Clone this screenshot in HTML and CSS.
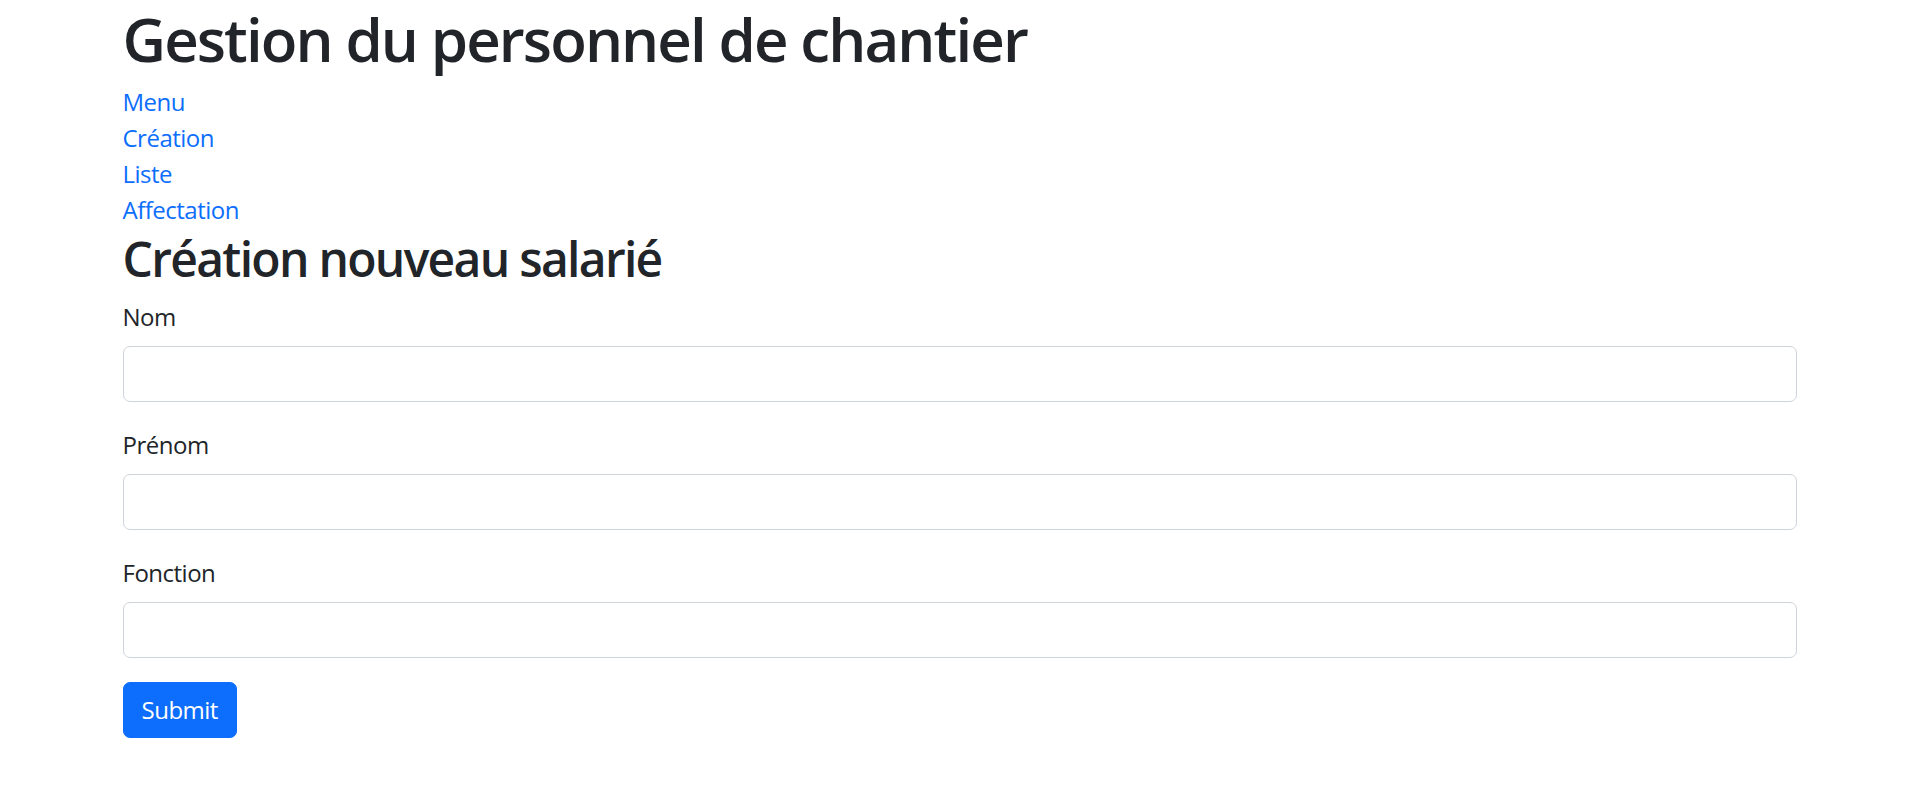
FILE: index.html
```html
<!DOCTYPE html>
<html lang="fr">
<head>
<meta charset="utf-8">
<title>Gestion du personnel de chantier</title>
<link rel="stylesheet" href="styles.css">
</head>
<body>
<div class="container">
  <h1 class="title">Gestion du personnel de chantier</h1>
  <nav class="nav">
    <a href="#">Menu</a>
    <a href="#">Création</a>
    <a href="#">Liste</a>
    <a href="#">Affectation</a>
  </nav>
  <h2 class="subtitle">Création nouveau salarié</h2>
  <form class="form">
    <div class="field">
      <label class="label" for="nom">Nom</label>
      <input class="input" id="nom" type="text">
    </div>
    <div class="field">
      <label class="label" for="prenom">Prénom</label>
      <input class="input" id="prenom" type="text">
    </div>
    <div class="field">
      <label class="label" for="fonction">Fonction</label>
      <input class="input" id="fonction" type="text">
    </div>
    <button class="btn" type="button">Submit</button>
  </form>
</div>
</body>
</html>
```
FILE: styles.css
```css
* { box-sizing: border-box; }
html, body { margin: 0; padding: 0; background: #fff; }
body {
  font-family: "Open Sans", "Noto Sans", sans-serif;
  font-size: 24px;
  line-height: 36px;
  letter-spacing: -0.5px;
  color: #212529;
}
.container {
  max-width: 1710px;
  margin: 0 auto;
  padding: 0 18px;
}
.title {
  font-size: 60px;
  font-weight: 600;
  line-height: 72px;
  letter-spacing: -1.9px;
  padding-top: 3px;
  margin: 0 0 9px;
}
.nav { display: flex; flex-direction: column; align-items: flex-start; }
.nav a { color: #0d6efd; text-decoration: none; }
.subtitle {
  font-size: 48px;
  font-weight: 600;
  line-height: 57.6px;
  letter-spacing: -1.7px;
  padding-top: 2px;
  margin: 0 0 10px;
}
.field { margin-bottom: 24px; }
.label { display: block; padding-top: 1px; margin-bottom: 11px; }
.input {
  display: block;
  width: 100%;
  height: 56px;
  border: 1px solid #ced4da;
  border-radius: 7px;
  padding: 9px 18px;
  font: inherit;
}
.btn {
  height: 56px;
  padding: 0 18px;
  border: 1px solid #0d6efd;
  background: #0d6efd;
  color: #fff;
  border-radius: 7px;
  font: inherit;
  letter-spacing: -0.5px;
}
```
